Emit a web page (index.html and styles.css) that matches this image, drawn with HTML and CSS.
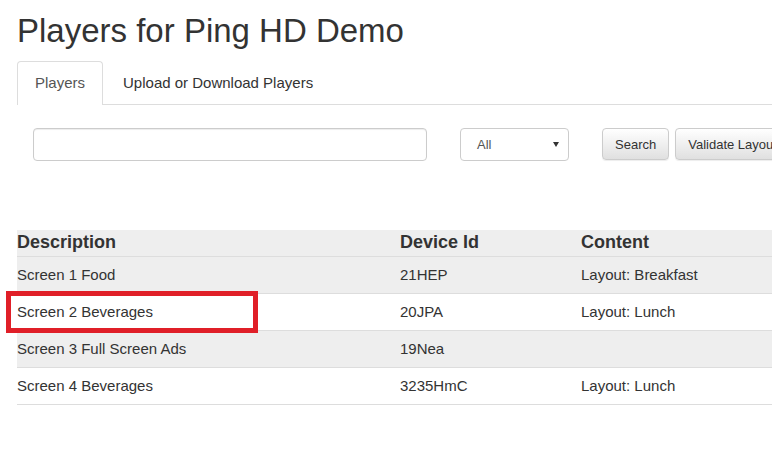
FILE: index.html
```html
<!DOCTYPE html>
<html lang="en">
<head>
  <meta charset="UTF-8">
  <meta name="viewport" content="width=device-width, initial-scale=1.0">
  <title>Players for Ping HD Demo</title>
  <link rel="stylesheet" href="styles.css">
</head>
<body>
  <div class="page">
    <h1>Players for Ping HD Demo</h1>

    <ul class="tabs">
      <li class="tab active">Players</li>
      <li class="tab">Upload or Download Players</li>
    </ul>

    <div class="filters">
      <input type="text" class="search-box">
      <div class="select">All<span class="caret"></span></div>
      <div class="buttons">
        <button class="btn">Search</button>
        <button class="btn">Validate Layouts</button>
      </div>
    </div>

    <div class="table-wrap">
      <table class="players">
        <thead>
          <tr>
            <th class="col-desc">Description</th>
            <th class="col-id">Device Id</th>
            <th>Content</th>
          </tr>
        </thead>
        <tbody>
          <tr class="odd">
            <td>Screen 1 Food</td>
            <td>21HEP</td>
            <td>Layout: Breakfast</td>
          </tr>
          <tr>
            <td>Screen 2 Beverages</td>
            <td>20JPA</td>
            <td>Layout: Lunch</td>
          </tr>
          <tr class="odd">
            <td>Screen 3 Full Screen Ads</td>
            <td>19Nea</td>
            <td></td>
          </tr>
          <tr>
            <td>Screen 4 Beverages</td>
            <td>3235HmC</td>
            <td>Layout: Lunch</td>
          </tr>
        </tbody>
      </table>
      <div class="highlight"></div>
    </div>
  </div>
</body>
</html>
```

FILE: styles.css
```css
html, body { margin: 0; background: #fff; }
body { font-family: "Liberation Sans", Arial, sans-serif; color: #333; }
.page { padding-left: 17px; height: 449px; overflow: hidden; }

h1 { font-size: 33px; font-weight: normal; line-height: 40px; margin: 11px 0 10px; color: #333; }

.tabs { list-style: none; margin: 0; padding: 0; display: flex; border-bottom: 1px solid #ddd; }
.tab { font-size: 15px; line-height: 42px; padding: 0 17px; border: 1px solid transparent; border-bottom: 0; margin-right: 2px; color: #333; }
.tab.active { border-color: #ddd; border-radius: 4px 4px 0 0; background: #fff; color: #555; margin-bottom: -1px; height: 43px; }

.filters { display: flex; align-items: flex-start; padding: 23px 0 0 16px; }
.search-box { flex-shrink: 0; box-sizing: border-box; width: 394px; height: 33px; border: 1px solid #ccc; border-radius: 4px; box-shadow: inset 0 1px 1px rgba(0,0,0,.075); margin: 0; }
.select { flex-shrink: 0; box-sizing: border-box; width: 109px; height: 33px; margin-left: 33px; border: 1px solid #ccc; border-radius: 4px; font-size: 13px; line-height: 31px; padding-left: 16px; color: #555; position: relative; }
.caret { position: absolute; right: 9px; top: 13px; width: 0; height: 0; border-left: 3px solid transparent; border-right: 3px solid transparent; border-top: 5px solid #333; }
.buttons { flex-shrink: 0; display: flex; gap: 6px; margin-left: 33px; white-space: nowrap; }
.btn { font-family: inherit; font-size: 13px; height: 32px; padding: 0 12px; color: #333; border: 1px solid #ccc; border-radius: 4px; background: linear-gradient(#fff, #e0e0e0); box-shadow: inset 0 1px 0 rgba(255,255,255,.15), 0 1px 1px rgba(0,0,0,.075); }

.table-wrap { position: relative; margin-top: 69px; }
.players { border-collapse: collapse; width: calc(100% + 30px); font-size: 15px; }
.players th { text-align: left; font-size: 18px; font-weight: bold; line-height: 20px; padding: 2px 0 4px 0; background: #eee; border-bottom: 1px solid #ddd; }
.players td { line-height: 20px; padding: 8px 0; border-bottom: 1px solid #ddd; }
.players .odd td { background: #eee; }
.col-desc { width: 383px; }
.col-id { width: 181px; }

.highlight { position: absolute; left: -11px; top: 61px; width: 252px; height: 42px; box-sizing: border-box; border: 5px solid #e01f28; }
```
